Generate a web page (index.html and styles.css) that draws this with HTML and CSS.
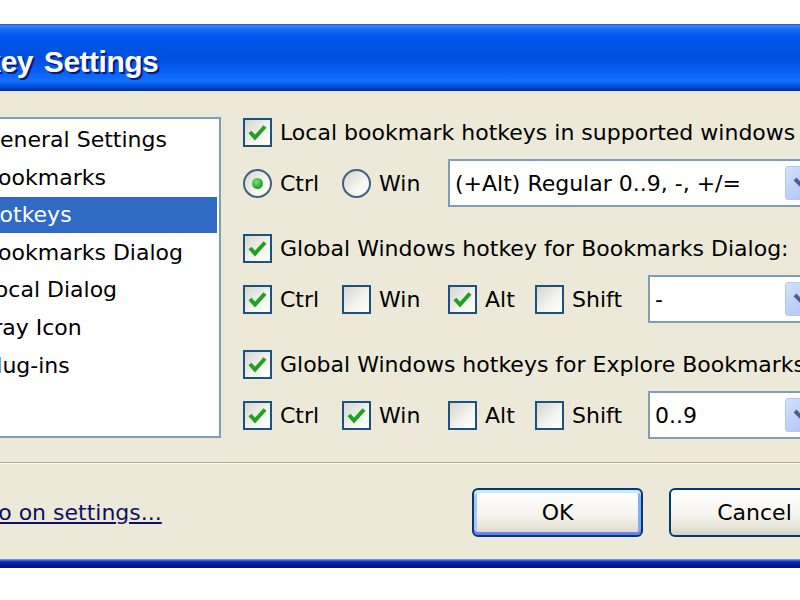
FILE: index.html
```html
<!DOCTYPE html>
<html lang="en">
<head>
    <meta charset="UTF-8" />
    <title>Hotkey Settings</title>
    <link rel="stylesheet" href="styles.css">
</head>
<body>
    <div class="screen">
        <div class="window">
            <div class="titlebar">
                <span class="title">Hotkey Settings</span>
            </div>
            <div class="client">
                <div class="main">
                    <ul class="pages">
                        <li>General Settings</li>
                        <li>Bookmarks</li>
                        <li class="selected">Hotkeys</li>
                        <li>Bookmarks Dialog</li>
                        <li>Local Dialog</li>
                        <li>Tray Icon</li>
                        <li>Plug-ins</li>
                    </ul>

                    <div class="options">
                        <div class="group">
                            <label class="opt head">
                                <span class="box on"><svg viewBox="0 0 25 25"><polyline points="5,12 10,17.5 20,6.5" /></svg></span>
                                Local bookmark hotkeys in supported windows
                            </label>
                            <div class="keys">
                                <label class="opt"><span class="radio on"></span>Ctrl</label>
                                <label class="opt"><span class="radio"></span>Win</label>
                                <div class="combo span">
                                    <span class="value">(+Alt) Regular 0..9, -, +/=</span>
                                    <span class="drop"><svg viewBox="0 0 30 30"><polyline points="9,11 15,17 21,11" /></svg></span>
                                </div>
                            </div>
                        </div>

                        <div class="group">
                            <label class="opt head">
                                <span class="box on"><svg viewBox="0 0 25 25"><polyline points="5,12 10,17.5 20,6.5" /></svg></span>
                                Global Windows hotkey for Bookmarks Dialog:
                            </label>
                            <div class="keys">
                                <label class="opt"><span class="box on"><svg viewBox="0 0 25 25"><polyline points="5,12 10,17.5 20,6.5" /></svg></span>Ctrl</label>
                                <label class="opt"><span class="box"></span>Win</label>
                                <label class="opt"><span class="box on"><svg viewBox="0 0 25 25"><polyline points="5,12 10,17.5 20,6.5" /></svg></span>Alt</label>
                                <label class="opt"><span class="box"></span>Shift</label>
                                <div class="combo">
                                    <span class="value">-</span>
                                    <span class="drop"><svg viewBox="0 0 30 30"><polyline points="9,11 15,17 21,11" /></svg></span>
                                </div>
                            </div>
                        </div>

                        <div class="group">
                            <label class="opt head">
                                <span class="box on"><svg viewBox="0 0 25 25"><polyline points="5,12 10,17.5 20,6.5" /></svg></span>
                                Global Windows hotkeys for Explore Bookmarks
                            </label>
                            <div class="keys">
                                <label class="opt"><span class="box on"><svg viewBox="0 0 25 25"><polyline points="5,12 10,17.5 20,6.5" /></svg></span>Ctrl</label>
                                <label class="opt"><span class="box on"><svg viewBox="0 0 25 25"><polyline points="5,12 10,17.5 20,6.5" /></svg></span>Win</label>
                                <label class="opt"><span class="box"></span>Alt</label>
                                <label class="opt"><span class="box"></span>Shift</label>
                                <div class="combo">
                                    <span class="value">0..9</span>
                                    <span class="drop"><svg viewBox="0 0 30 30"><polyline points="9,11 15,17 21,11" /></svg></span>
                                </div>
                            </div>
                        </div>
                    </div>
                </div>

                <div class="separator"></div>

                <div class="footer">
                    <a class="info" href="#">Info on settings...</a>
                    <div class="buttons">
                        <button class="btn default">OK</button>
                        <button class="btn">Cancel</button>
                    </div>
                </div>
            </div>
            <div class="frame-bottom"></div>
        </div>
    </div>
</body>
</html>
```

FILE: styles.css
```css
body {
    margin: 0;
    background: #fff;
    font-family: "DejaVu Sans", Verdana, sans-serif;
    font-size: 22px;
    color: #000;
}

.screen {
    width: 800px;
    height: 600px;
    overflow: hidden;
    padding-top: 24px;
    box-sizing: border-box;
}

.window {
    width: 960px;
    margin-left: -100px;
    background: #ece9d8;
}

/* luna style caption */
.titlebar {
    height: 67px;
    box-sizing: border-box;
    padding: 21px 0 0 36px;
    background: linear-gradient(to bottom,
        #1d4fc4 0, #3a8cf7 2px, #1a6ef5 5px, #0058ee 12px,
        #0050dc 35px, #0b64f6 50px, #1371fb 57px, #0052dd 62px, #0030a8 67px);
}

.title {
    font-family: "Liberation Sans", Arial, sans-serif;
    font-weight: bold;
    font-size: 30px;
    line-height: 34px;
    letter-spacing: -0.5px;
    word-spacing: 3px;
    color: #fff;
    text-shadow: 2px 2px 0 #0a1883;
    white-space: nowrap;
}

.client {
    padding: 26px 20px 0 78px;
}

.main {
    display: flex;
    gap: 22px;
    align-items: flex-start;
}

.pages {
    flex: none;
    width: 243px;
    height: 321px;
    box-sizing: border-box;
    margin: 0;
    padding: 3px 0 0;
    list-style: none;
    background: #fff;
    border: 2px solid #7f9db9;
}

.pages li {
    height: 36px;
    line-height: 36px;
    margin: 0 2px 1.6px 2px;
    padding-left: 1px;
    white-space: nowrap;
}

.pages li.selected {
    background: #316ac5;
    color: #fff;
}

.options {
    flex: 1;
    margin-right: 18px;
    display: flex;
    flex-direction: column;
}

.group + .group {
    margin-top: 26px;
}

.opt {
    display: flex;
    align-items: center;
    gap: 8px;
    white-space: nowrap;
}

.head {
    height: 30px;
}

.keys {
    margin-top: 12px;
    height: 48px;
    display: grid;
    grid-template-columns: 99px 106px 87px 113px 1fr;
    align-items: center;
}

/* check boxes and radio buttons */
.box {
    flex: none;
    width: 29px;
    height: 29px;
    box-sizing: border-box;
    border: 2px solid #1c5180;
    background: linear-gradient(135deg, #d6d6cf, #f4f4f0 60%, #fff);
}

.box svg {
    display: block;
    width: 25px;
    height: 25px;
}

.box polyline {
    fill: none;
    stroke: #21a121;
    stroke-width: 4;
}

.radio {
    flex: none;
    width: 29px;
    height: 29px;
    box-sizing: border-box;
    border: 2px solid #43607e;
    border-radius: 50%;
    background: linear-gradient(135deg, #d6d6cf, #f6f6f2 60%, #fff);
    display: flex;
    align-items: center;
    justify-content: center;
}

.radio.on::after {
    content: "";
    width: 11px;
    height: 11px;
    border-radius: 50%;
    background: radial-gradient(circle at 40% 35%, #7be07b, #21a121 70%);
}

/* drop-down lists */
.combo {
    height: 48px;
    box-sizing: border-box;
    border: 2px solid #7f9db9;
    background: #fff;
    display: flex;
    align-items: center;
    padding-left: 5px;
}

.combo.span {
    grid-column: 3 / -1;
}

.combo .value {
    white-space: nowrap;
}

.drop {
    margin-left: auto;
    margin-right: 3px;
    width: 32px;
    height: 34px;
    box-sizing: border-box;
    border: 1px solid #b3c6f3;
    border-radius: 3px;
    background: linear-gradient(135deg, #d2e0fd, #b9cdf8 60%, #aec4f4);
}

.drop svg {
    display: block;
    width: 30px;
    height: 32px;
}

.drop polyline {
    fill: none;
    stroke: #4d6185;
    stroke-width: 4;
}

.separator {
    margin-top: 23px;
    border-top: 1px solid #aca899;
    border-bottom: 1px solid #fff;
}

.footer {
    display: flex;
    align-items: center;
    padding: 24px 0 22px;
}

.info {
    margin-left: -8px;
    color: #101060;
    text-decoration: underline;
    white-space: nowrap;
}

.buttons {
    margin-left: auto;
    display: flex;
    gap: 26px;
}

.btn {
    width: 171px;
    height: 49px;
    font: inherit;
    color: #000;
    border: 2px solid #003c74;
    border-radius: 6px;
    background: linear-gradient(to bottom, #fff, #f5f4ef 55%, #e6e3d6 85%, #d6d0c5);
}

.btn.default {
    box-shadow: inset 0 3px 0 #cee7ff, inset 0 -3px 0 #6982ee,
                inset 3px 0 0 #a9c6f6, inset -3px 0 0 #8aa9ef;
}

.frame-bottom {
    height: 9px;
    background: linear-gradient(to bottom,
        #5a8ee8 0, #5a8ee8 1px, #1238c0 2px, #001a9c 5px, #00138a 9px);
}
```
